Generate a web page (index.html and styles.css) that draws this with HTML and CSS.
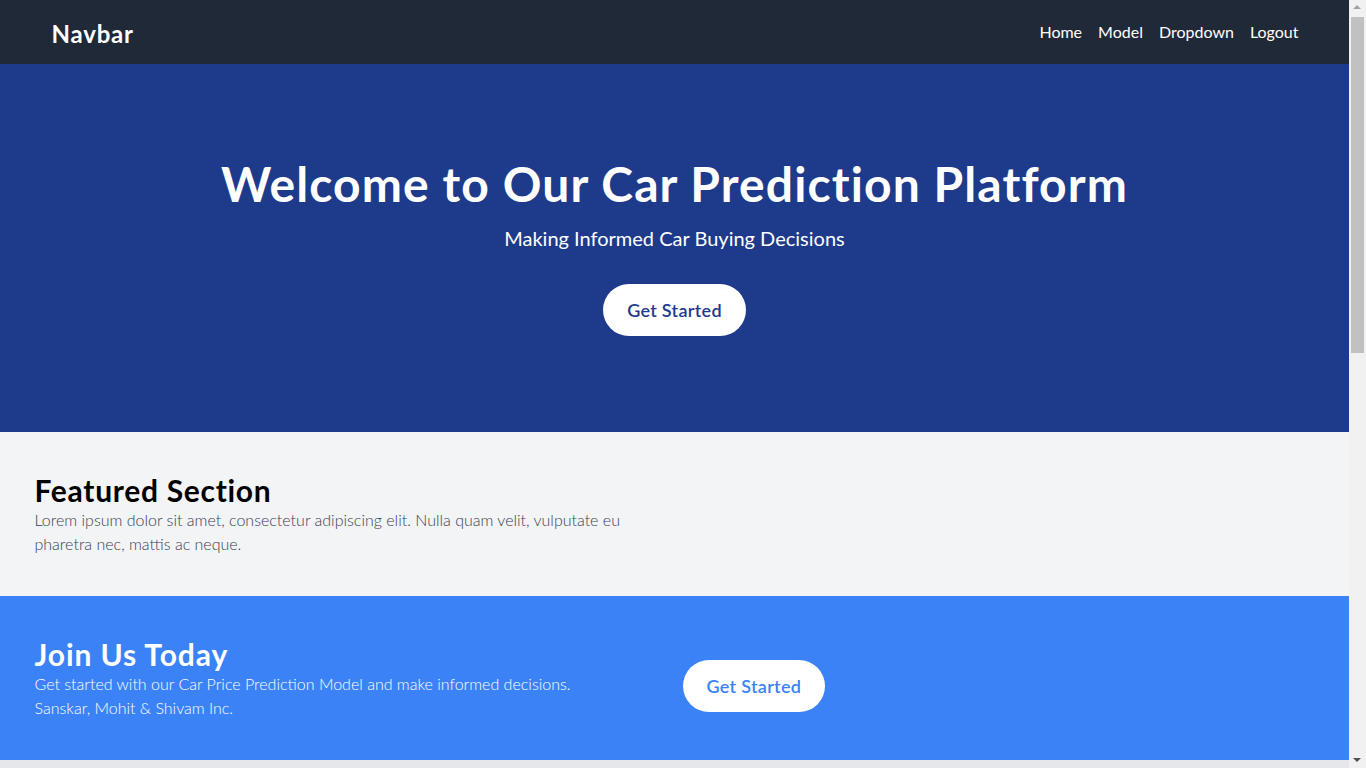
FILE: index.html
```html
<!DOCTYPE html>
<html lang="en">
<head>
<meta charset="utf-8">
<title>Car Prediction Platform</title>
<link rel="stylesheet" href="styles.css">
</head>
<body>
<nav class="navbar">
  <div class="nav-inner">
    <a class="brand" href="#">Navbar</a>
    <ul class="nav-links">
      <li><a href="#">Home</a></li>
      <li><a href="#">Model</a></li>
      <li><a href="#">Dropdown</a></li>
      <li><a href="#">Logout</a></li>
    </ul>
  </div>
</nav>
<header class="hero">
  <h1 class="hero-title">Welcome to Our Car Prediction Platform</h1>
  <p class="hero-sub">Making Informed Car Buying Decisions</p>
  <a class="btn btn-dark" href="#">Get Started</a>
</header>
<section class="featured">
  <div class="container">
    <div class="half">
      <h2 class="sec-title">Featured Section</h2>
      <p class="sec-text">Lorem ipsum dolor sit amet, consectetur adipiscing elit. Nulla quam velit, vulputate eu pharetra nec, mattis ac neque.</p>
    </div>
  </div>
</section>
<section class="join">
  <div class="container join-row">
    <div class="half">
      <h2 class="sec-title join-title">Join Us Today</h2>
      <p class="sec-text">Get started with our Car Price Prediction Model and make informed decisions.<br>Sanskar, Mohit &amp; Shivam Inc.</p>
    </div>
    <div class="join-action">
      <a class="btn btn-light" href="#">Get Started</a>
    </div>
  </div>
</section>
<footer class="footer"></footer>
<div class="fake-scrollbar" aria-hidden="true">
  <div class="sb-up"></div>
  <div class="sb-thumb"></div>
  <div class="sb-down"></div>
</div>
</body>
</html>
```
FILE: styles.css
```css
* { box-sizing: border-box; }
html, body { margin: 0; padding: 0; }
body {
  font-family: Lato, "Open Sans", "Noto Sans", sans-serif;
  color: #111827;
  padding-right: 17px;
}
a { text-decoration: none; color: inherit; }
h1, h2, p, ul { margin: 0; padding: 0; }

.navbar { background: #1f2937; height: 64px; }
.nav-inner {
  max-width: 1280px; margin: 0 auto; padding: 0 16px;
  height: 64px; display: flex; align-items: center; justify-content: space-between;
}
.brand { color: #fff; font-size: 24px; font-weight: 700; line-height: 32px; margin-top: 4px; letter-spacing: 0.8px; margin-left: 1px; }
.nav-links { list-style: none; display: flex; gap: 16px; }
.nav-links a { color: #fff; font-size: 16px; font-weight: 400; line-height: 24px; }

.hero { background: #1e3a8a; color: #fff; text-align: center; padding: 96px 16px; }
.hero-title { font-size: 48px; line-height: 48px; font-weight: 700; margin-bottom: 16px; letter-spacing: 1.1px; }
.hero-sub { font-size: 20px; line-height: 28px; margin-bottom: 32px; }

.btn {
  display: inline-block; background: #fff; border-radius: 9999px;
  padding: 12px 24px; font-size: 18px; line-height: 28px; font-weight: 600;
  letter-spacing: 0.3px;
}
.btn-dark { color: #1e3a8a; }
.btn-light { color: #3b82f6; }

.container { max-width: 1280px; margin: 0 auto; }
.half { width: 640px; }
.featured { background: #f3f4f6; padding: 40px 0; }
.sec-title { font-size: 30px; line-height: 36px; font-weight: 700; letter-spacing: 0.7px; }
.join-title { letter-spacing: 0.9px; }
.featured .sec-title { color: #000; }
.sec-text { font-size: 16px; line-height: 24px; font-weight: 300; color: #374151; }

.join { background: #3b82f6; padding: 40px 0; color: #fff; }
.join .sec-text { color: #fff; }
.join-row { display: flex; align-items: flex-start; }
.join-action { margin-left: 8px; padding-top: 24px; }

.footer { background: #e5e7eb; height: 8px; }

.fake-scrollbar {
  position: fixed; top: 0; right: 0; width: 17px; height: 100vh;
  background: #f1f1f1;
}
.sb-thumb {
  position: absolute; top: 17px; left: 2px; width: 13px; height: 336px;
  background: #c1c1c1;
}
.sb-up, .sb-down {
  position: absolute; left: 4px; width: 0; height: 0;
  border-left: 4.5px solid transparent; border-right: 4.5px solid transparent;
}
.sb-up { top: 5px; border-bottom: 4px solid #a3a3a3; }
.sb-down { bottom: 6px; border-top: 4px solid #505050; }
```
